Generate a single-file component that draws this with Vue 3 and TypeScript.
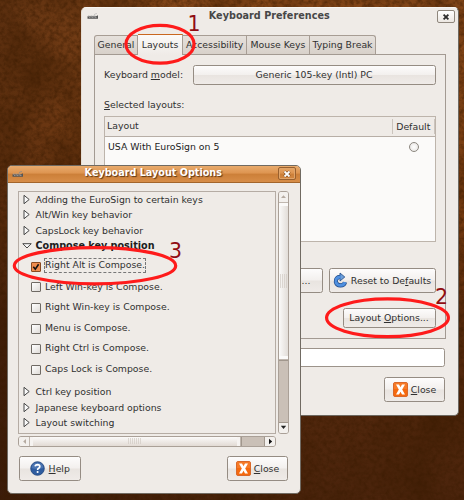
<script setup lang="ts">
interface Check { label: string; checked: boolean }

const tabs: string[] = ['General', 'Layouts', 'Accessibility', 'Mouse Keys', 'Typing Break']
const activeTab = 'Layouts'
const groupsBefore: string[] = [
  'Adding the EuroSign to certain keys',
  'Alt/Win key behavior',
  'CapsLock key behavior',
]
const groupsAfter: string[] = ['Ctrl key position', 'Japanese keyboard options', 'Layout switching']
const checks: Check[] = [
  { label: 'Right Alt is Compose.', checked: true },
  { label: 'Left Win-key is Compose.', checked: false },
  { label: 'Right Win-key is Compose.', checked: false },
  { label: 'Menu is Compose.', checked: false },
  { label: 'Right Ctrl is Compose.', checked: false },
  { label: 'Caps Lock is Compose.', checked: false },
]
</script>

<template>
  <div class="desktop">
    <svg class="leather" width="464" height="500">
      <defs>
        <filter id="grain" x="0" y="0" width="100%" height="100%">
          <feTurbulence type="fractalNoise" baseFrequency="0.22" numOctaves="3" seed="7" />
          <feColorMatrix values="0 0 0 0 0.04  0 0 0 0 0.01  0 0 0 0 0  1.1 0 0 0 -0.38" />
        </filter>
        <filter id="blotch" x="0" y="0" width="100%" height="100%">
          <feTurbulence type="fractalNoise" baseFrequency="0.02" numOctaves="3" seed="3" />
          <feColorMatrix values="0 0 0 0 0.04  0 0 0 0 0.01  0 0 0 0 0  1 0 0 0 -0.35" />
        </filter>
      </defs>
      <rect width="464" height="500" filter="url(#blotch)" />
      <rect width="464" height="500" filter="url(#grain)" />
    </svg>

    <section class="window prefs">
      <header class="title">
        <svg class="kbd" width="12" height="8" viewBox="0 0 12 8"><path d="M.5 4.3h8.5l2-1v3.4H.5z" fill="#555" /><path d="M1 4h8M2 5.4h8" stroke="#aaa" stroke-width=".8" stroke-dasharray="1 .5" /><path d="M7 3.5Q7 1.5 10 1.5" stroke="#bbb" stroke-width=".7" fill="none" /></svg>
        <b>Keyboard Preferences</b>
        <span class="x"><svg width="8" height="8" viewBox="0 0 8 8"><path d="M1.6 1.6 6.4 6.4M6.4 1.6 1.6 6.4" stroke="#2c2c2c" stroke-width="1.8" /></svg></span>
      </header>
      <nav class="tabs">
        <span v-for="t in tabs" :key="t" class="tab" :class="{ active: t === activeTab }">{{ t }}</span>
      </nav>
      <div class="panel">
        <div class="model">
          <span>Keyboard <u>m</u>odel:</span>
          <span class="btn">Generic 105-key (Intl) PC</span>
        </div>
        <div class="selected"><u>S</u>elected layouts:</div>
        <div class="table">
          <div class="thead"><span>Layout</span><span class="def">Default</span></div>
          <div class="trow"><span>USA With EuroSign on 5</span><i class="radio"></i></div>
        </div>
        <div class="actions">
          <span class="btn more">...</span>
          <span class="btn reset">
            <svg width="15" height="17" viewBox="0 0 15 17"><path d="M8 5C4 4.6 2.4 7.2 2.9 10 4 14.4 10.8 14.6 12 10.2" fill="none" stroke="#204a87" stroke-width="4.2" /><path d="M7 1 11.8 5 7 9z" fill="#6f9fd8" stroke="#204a87" stroke-width=".8" /><path d="M8 5C4 4.6 2.4 7.2 2.9 10 4 14.4 10.8 14.6 12 10.2" fill="none" stroke="#4f8fdf" stroke-width="2.9" /></svg>
            <span>Reset to De<u>f</u>aults</span>
          </span>
        </div>
        <div class="opts"><span class="btn"><span>Layout <u>O</u>ptions...</span></span></div>
      </div>
      <div class="entry"></div>
      <div class="foot">
        <span class="btn close"><svg width="15" height="15" viewBox="0 0 15 15"><rect x=".5" y=".5" width="14" height="14" rx="1.5" fill="#f5690e" stroke="#d9682a" /><rect x="1" y="1" width="13" height="6" fill="#fa8b3e" opacity=".5" /><path d="M3 2.5H6L7.5 5.2 9 2.5h3L9.2 7.4 12 12.5H9L7.5 9.7 6 12.5H3L5.8 7.4z" fill="#fff" /></svg><span><u>C</u>lose</span></span>
      </div>
    </section>

    <section class="window options">
      <header class="title">
        <svg class="kbd" width="12" height="8" viewBox="0 0 12 8"><path d="M.5 4.3h8.5l2-1v3.4H.5z" fill="#555" /><path d="M1 4h8M2 5.4h8" stroke="#aaa" stroke-width=".8" stroke-dasharray="1 .5" /><path d="M7 3.5Q7 1.5 10 1.5" stroke="#888" stroke-width=".7" fill="none" /></svg>
        <b>Keyboard Layout Options</b>
        <span class="x"><svg width="8" height="8" viewBox="0 0 8 8"><path d="M1.5 1.5 6.5 6.5M6.5 1.5 1.5 6.5" stroke="#6b3c14" stroke-width="3" /><path d="M1.5 1.5 6.5 6.5M6.5 1.5 1.5 6.5" stroke="#fff" stroke-width="1.8" /></svg></span>
      </header>
      <div class="scroller">
        <div class="list">
          <div v-for="g in groupsBefore" :key="g" class="group">
            <svg width="8" height="10" viewBox="0 0 8 10"><path d="M1 .3 6.2 4.5 1 8.7z" fill="#fafafa" stroke="#333" stroke-width=".9" /></svg><span>{{ g }}</span>
          </div>
          <div class="group open">
            <svg width="10" height="8" viewBox="0 0 10 8"><path d="M.8 1.7H9.2L5 6z" fill="#fafafa" stroke="#333" stroke-width=".9" /></svg><b>Compose key position</b>
          </div>
          <div class="checks">
            <div v-for="c in checks" :key="c.label" class="check">
              <i class="box" :class="{ on: c.checked }"><svg v-if="c.checked" width="8" height="8" viewBox="0 0 8 8"><path d="M1.3 3.7 3.3 6.2 6.6 1.2" fill="none" stroke="#111" stroke-width="1.6" /></svg></i>
              <span :class="{ focus: c.checked }">{{ c.label }}</span>
            </div>
          </div>
          <div v-for="g in groupsAfter" :key="g" class="group">
            <svg width="8" height="10" viewBox="0 0 8 10"><path d="M1 .3 6.2 4.5 1 8.7z" fill="#fafafa" stroke="#333" stroke-width=".9" /></svg><span>{{ g }}</span>
          </div>
        </div>
        <div class="vbar">
          <span class="cap dim"><svg width="7" height="5" viewBox="0 0 7 5"><path d="M1 4 3.5 1.2 6 4z" fill="#b5aaa0" /></svg></span>
          <span class="thumb"><i class="grip"></i></span>
          <span class="trough"></span>
          <span class="cap"><svg width="7" height="5" viewBox="0 0 7 5"><path d="M.8 .8 3.5 4 6.2 .8z" fill="#222" /></svg></span>
        </div>
      </div>
      <div class="hbar">
        <span class="cap dim"><svg width="5" height="7" viewBox="0 0 5 7"><path d="M4 1 1.2 3.5 4 6z" fill="#b5aaa0" /></svg></span>
        <span class="thumb"><i class="grip"></i></span>
        <span class="trough"></span>
        <span class="cap"><svg width="5" height="7" viewBox="0 0 5 7"><path d="M1 .8 4.2 3.5 1 6.2z" fill="#111" /></svg></span>
      </div>
      <div class="foot">
        <span class="btn help"><svg width="15" height="15" viewBox="0 0 15 15"><circle cx="7.5" cy="7.5" r="6.8" fill="#2f5c9f" stroke="#1d427c" stroke-width=".8" /><path d="M1.5 7Q2 1.6 7.5 1.5 13 1.6 13.5 7 7 9 1.5 7z" fill="#6388bf" opacity=".55" /><path d="M5.2 5.4Q5.3 3.6 7.6 3.6 9.8 3.7 9.8 5.5 9.8 6.6 8.6 7.3 7.6 7.8 7.6 9" fill="none" stroke="#fff" stroke-width="1.7" /><circle cx="7.6" cy="11" r="1.05" fill="#fff" /></svg><span><u>H</u>elp</span></span>
        <span class="btn close"><svg width="15" height="15" viewBox="0 0 15 15"><rect x=".5" y=".5" width="14" height="14" rx="1.5" fill="#f5690e" stroke="#d9682a" /><rect x="1" y="1" width="13" height="6" fill="#fa8b3e" opacity=".5" /><path d="M3 2.5H6L7.5 5.2 9 2.5h3L9.2 7.4 12 12.5H9L7.5 9.7 6 12.5H3L5.8 7.4z" fill="#fff" /></svg><span><u>C</u>lose</span></span>
      </div>
    </section>

    <svg class="marks" width="464" height="500" viewBox="0 0 464 500">
      <g fill="none" stroke="#fe1b1b" stroke-width="3.2">
        <ellipse cx="160" cy="44.2" rx="34.1" ry="18.9" />
        <ellipse cx="387.5" cy="317.8" rx="60.9" ry="18.9" />
        <ellipse cx="95" cy="265.7" rx="80.7" ry="18.1" />
      </g>
      <text x="187.5" y="31">1</text>
      <text x="435" y="304">2</text>
      <text x="169" y="257.6">3</text>
    </svg>
  </div>
</template>

<style>
body { margin: 0; overflow: hidden; }
</style>

<style scoped>
* { box-sizing: border-box; }
.desktop {
  position: relative; width: 464px; height: 500px; overflow: hidden;
  font: 9.33px/12px "DejaVu Sans", sans-serif; color: #303030;
  background:
    linear-gradient(90deg, rgba(30, 12, 4, .35) 0%, rgba(30, 12, 4, 0) 45%),
    linear-gradient(180deg, #88491a 0%, #864617 25%, #743a10 45%, #572a0d 65%, #4b240c 100%);
}
.leather, .marks { position: absolute; left: 0; top: 0; }
.marks text { font-size: 20.5px; fill: #900d12; }
u { text-decoration: underline; text-decoration-thickness: 1px; text-underline-offset: 1px; }
svg { display: block; flex: none; }
.window { position: absolute; background: #efebe7; border: 1px solid #706a62; border-radius: 5px; display: flex; flex-direction: column; white-space: nowrap; }
.prefs { left: 81px; top: 7px; width: 377.5px; height: 408.5px; border-color: #f7f5f2 #6d6860 #6d6860 #e6dfd6; padding: 0 12px 0 12px; }
.options { left: 6.5px; top: 164.5px; width: 294.5px; height: 329px; padding: 0 11.5px 0 10.5px; }

.title { display: flex; align-items: center; justify-content: space-between; flex: none; }
.title b { font-size: 9.65px; }
.x { display: flex; align-items: center; justify-content: center; width: 18px; height: 13px; border: 1px solid #8f877d; border-radius: 2px; }
.prefs .title { height: 16px; margin: 0 -10px 0 -8px; color: #474747; padding-left: 1px; border-radius: 4px; }
.prefs .title b { letter-spacing: .04px; margin-left: 2px; }
.prefs .x { background: linear-gradient(#fff, #ece7e2); margin-top: 1px; }
.options .title { height: 17.5px; margin: 0 -11.5px 0 -10.5px; padding: 0 3.5px 0 4.5px; color: #fff; border-radius: 4px 4px 0 0; border-bottom: 1px solid #a3652b; background: linear-gradient(#e9ab6d 0, #dd9450 45%, #cc7f38 50%, #d78d48 100%); }
.options .title b { text-shadow: 1px 1px 1px #5a3514; margin: -1px 0 0 4px; }
.options .x { border-color: #99602e; box-shadow: inset 0 0 0 1px #e0a469; }

.tabs { display: flex; align-items: flex-end; height: 30px; flex: none; }
.tab { display: flex; align-items: center; justify-content: center; height: 19px; border: 1px solid #a79d94; border-left-width: 0; border-bottom: 0; background: linear-gradient(#e6e1dc, #d8d1ca); width: 64.2px; }
.tab:nth-child(1) { width: 44px; border-left-width: 1px; border-top-left-radius: 3px; }
.tab:nth-child(4) { width: 62.6px; }
.tab:nth-child(5) { width: 66.5px; border-top-right-radius: 3px; }
.tab.active { width: 45px; height: 21px; margin-bottom: -1px; background: linear-gradient(#fbfaf9, #efebe7); border-top: 1.6px solid #c9671f; position: relative; z-index: 1; }
.panel { height: 285px; width: 352px; flex: none; border: 1px solid #a39a92; padding: 10px 9.5px 0 9px; display: flex; flex-direction: column; }
.btn { display: flex; align-items: center; justify-content: center; border: 1px solid #958c83; border-radius: 2.5px; background: linear-gradient(#fdfcfc 0, #f3f0ee 48%, #e9e4e0 52%, #efebe8 100%); }
.model { display: flex; align-items: center; justify-content: space-between; height: 20px; flex: none; }
.model .btn { width: 243px; height: 20px; }
.selected { margin-top: 14px; height: 12px; flex: none; }
.table { margin-top: 4.5px; height: 126.5px; flex: none; border: 1px solid #bdb4ab; background: #fbfaf9; display: flex; flex-direction: column; }
.thead { display: flex; align-items: center; justify-content: space-between; height: 20px; background: #efebe7; border-bottom: 1px solid #b7aea6; padding-left: 2px; }
.def { border-left: 1px solid #cbc4bd; border-right: 1px solid #cbc4bd; height: 15px; width: 42.5px; line-height: 15px; text-align: center; }
.trow { display: flex; align-items: center; justify-content: space-between; height: 20px; padding: 0 15.5px 0 3px; color: #1c1c1c; }
.radio { width: 10px; height: 10px; border-radius: 50%; border: 1px solid #8c8780; background: radial-gradient(#fff, #e4e1de); }
.actions { display: flex; justify-content: flex-end; gap: 6px; margin-top: 26px; height: 25px; flex: none; }
.more { width: 62px; padding-left: 40px; justify-content: flex-start; }
.reset { width: 107px; gap: 3px; }
.opts { display: flex; justify-content: flex-end; margin-top: 15px; }
.opts .btn { width: 93px; height: 20px; }
.entry { margin-top: 9px; width: 351px; height: 19px; flex: none; background: #fff; border: 1px solid #9c938a; border-radius: 2.5px; }
.prefs .foot { display: flex; justify-content: flex-end; width: 351px; margin-top: 10px; }
.close { width: 61px; height: 25px; gap: 3px; }
.help { width: 62px; height: 25px; gap: 3.5px; }

.scroller { display: flex; justify-content: space-between; margin-top: 8px; height: 242.5px; flex: none; }
.list { width: 258px; border: 1px solid #b5aca4; padding: 0 0 0 3.5px; display: flex; flex-direction: column; }
.group { display: flex; align-items: center; height: 15.5px; flex: none; }
.group svg { width: 8px; margin-right: 5px; }
.group.open svg { width: 10px; margin: 0 4px 0 -1px; }
.group b { color: #1d1d1d; font-size: 9.65px; }
.checks { padding: 1.7px 0 5.3px 8.5px; }
.check { display: flex; align-items: center; height: 20.6px; gap: 3px; }
.box { width: 10px; height: 10px; margin-top: 1.5px; border: 1px solid #6f6a64; border-radius: 1px; background: linear-gradient(135deg, #fff, #dfdbd7); }
.box.on { background: #ef8d4e; border-color: #8a4a20; }
.check span { padding: 1px; }
.check .focus { padding: 0 0 1px 0; border: 1px dashed #777; }
.vbar { display: flex; flex-direction: column; width: 11px; border: 1px solid #aaa097; border-radius: 3px; overflow: hidden; }
.hbar { display: flex; width: 258px; height: 11px; margin-top: 2px; border: 1px solid #aaa097; border-radius: 3px; overflow: hidden; flex: none; }
.cap { display: flex; align-items: center; justify-content: center; background: #f3f0ed; flex: none; }
.vbar .cap { height: 9.5px; }
.hbar .cap { width: 10px; }
.thumb { display: flex; align-items: center; justify-content: center; flex: none; border: 0 solid #c0b7af; }
.vbar .thumb { height: 158.5px; border-width: 1px 0; background: linear-gradient(90deg, #fbfaf9, #e2ddd8); }
.hbar .thumb { width: 212px; border-width: 0 1px; background: linear-gradient(#fbfaf9, #e2dad4); box-shadow: inset 4px 0 0 -1px #f6f3f1, inset -4px 0 0 -1px #f6f3f1; }
.vbar .thumb { box-shadow: inset 0 4px 0 -1px #fbfaf9, inset 0 -4px 0 -1px #fbfaf9; }
.grip { width: 7px; height: 14px; background: repeating-linear-gradient(90deg, #d2cbc4 0 1px, transparent 1px 2px); opacity: .7; }
.hbar .grip { width: 14px; height: 6px; }
.trough { flex: 1; background: #cac0b7; border: 0 solid #a1978d; }
.vbar .trough { border-width: 1px 0; }
.hbar .trough { border-width: 0 1px; }
.options .foot { display: flex; justify-content: space-between; margin: 9.5px .5px 0 1px; }
</style>
